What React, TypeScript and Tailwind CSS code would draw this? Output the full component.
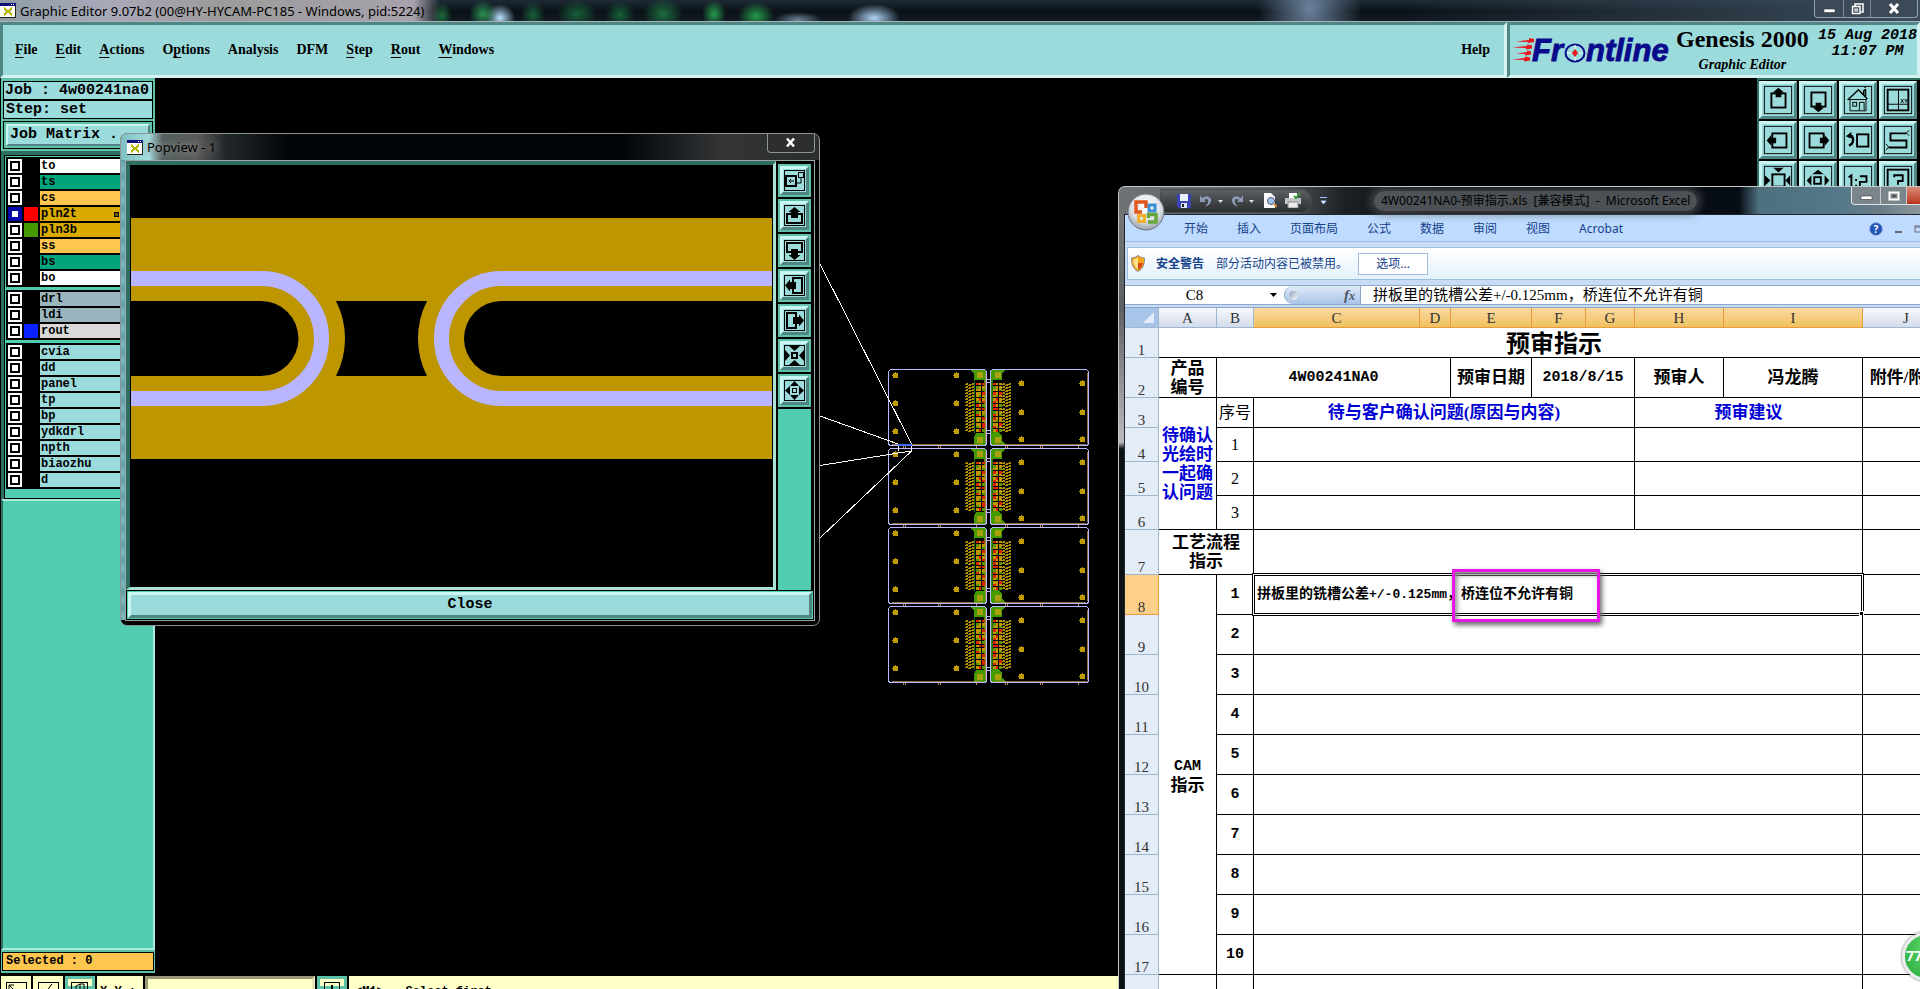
import React from "react";

const MONO = "font-['Liberation_Mono','Noto_Sans_CJK_SC',monospace]";
const SERIF = "font-['Liberation_Serif','Noto_Sans_CJK_SC',serif]";
const UI = "font-['Noto_Sans','Noto_Sans_CJK_SC',sans-serif]";

const RAISED =
  "border-t-[#c9f6f3] border-l-[#c9f6f3] border-b-[#4f8583] border-r-[#4f8583]";
const SUNKEN =
  "border-t-[#4f8583] border-l-[#4f8583] border-b-[#d3f2f0] border-r-[#d3f2f0]";

function XIcon() {
  return (
    <svg width="16" height="15" viewBox="0 0 16 15" shapeRendering="crispEdges">
      <rect width="16" height="15" fill="#fff" />
      <rect width="16" height="3" fill="#10107a" />
      <rect x="11" y="1" width="1" height="1" fill="#fff" />
      <rect x="13" y="1" width="1" height="1" fill="#fff" />
      <path d="M4 5l8 7M12 5l-8 7" stroke="#b7b700" strokeWidth="2" />
      <path d="M15.5 3v11.500H0" stroke="#222" fill="none" />
    </svg>
  );
}

function TitleBar() {
  return (
    <header className="relative flex h-[22px] shrink-0 items-center justify-between border-b border-[#a9b3ba] bg-[linear-gradient(180deg,#1d2a35_0%,#0b1117_55%,#111a22_100%)]">
      <div className="absolute inset-0 bg-[radial-gradient(ellipse_10px_14px_at_442px_16px,#1d6a3a,transparent),radial-gradient(ellipse_14px_14px_at_483px_14px,#2b8f52,transparent),radial-gradient(ellipse_15px_14px_at_500px_18px,#b8e0ff,transparent),radial-gradient(ellipse_12px_14px_at_533px_15px,#17603a,transparent),radial-gradient(ellipse_20px_14px_at_577px_14px,#17603a,transparent),radial-gradient(ellipse_15px_14px_at_620px_15px,#17603a,transparent),radial-gradient(ellipse_20px_16px_at_663px_14px,#1b6e3e,transparent),radial-gradient(ellipse_12px_14px_at_714px_14px,#259a4c,transparent),radial-gradient(ellipse_18px_14px_at_756px_16px,#259a4c,transparent),radial-gradient(ellipse_24px_8px_at_798px_20px,#6a8496,transparent),radial-gradient(ellipse_26px_14px_at_874px_18px,#b0d4f8,transparent),radial-gradient(ellipse_52px_60px_at_1310px_8px,#6b819c,transparent),linear-gradient(90deg,transparent_1400px,#3a4b5a_1900px)]" />
      <div className="absolute inset-y-0 left-0 w-[440px] bg-[linear-gradient(90deg,#8f9da5_0%,#a9a9b9_25%,#9b9b9b_50%,#a7a2ac_94%,transparent_100%)]" />
      <div className="relative flex items-center gap-1">
        <XIcon />
        <h1 className={`${UI} text-[13px] leading-4 whitespace-nowrap text-black`}>
          Graphic Editor 9.07b2 (00@HY-HYCAM-PC185 - Windows, pid:5224)
        </h1>
      </div>
      <div className="relative mr-[2px] flex h-[18px] self-start overflow-hidden rounded-b border border-t-0 border-[#93a0ab] bg-[#3c4a58]">
        <button aria-label="Minimize" className="flex w-[29px] items-center justify-center border-r border-[#7d8a96]">
          <svg width="13" height="12"><rect x="1" y="6" width="11" height="3.500" fill="#fff" stroke="#333" strokeWidth=".6" /></svg>
        </button>
        <button aria-label="Restore" className="flex w-[27px] items-center justify-center border-r border-[#7d8a96]">
          <svg width="13" height="12" fill="none" stroke="#fff" strokeWidth="1.500"><path d="M4 3V1h8v8h-2" /><rect x="1.500" y="3.500" width="7.500" height="7" /><rect x="4" y="6" width="2.500" height="2" strokeWidth="1" /></svg>
        </button>
        <button aria-label="Close" className="flex w-[46px] items-center justify-center">
          <svg width="12" height="11"><path d="M2 1l8 9M10 1l-8 9" stroke="#fff" strokeWidth="3" /></svg>
        </button>
      </div>
    </header>
  );
}

const MENU: [string, string, string][] = [
  ["", "F", "ile"],
  ["", "E", "dit"],
  ["", "A", "ctions"],
  ["O", "p", "tions"],
  ["Analysis", "", ""],
  ["DFM", "", ""],
  ["", "S", "tep"],
  ["", "R", "out"],
  ["", "W", "indows"],
];

function FrontlineLogo() {
  return (
    <svg width="162" height="40" viewBox="0 -6 162 40">
      <g fill="#e8161c">
        <path d="M4 3.500L17 2v-2l5 1v3l-6 1V4z" />
        <path d="M0 9.500L15 8V6.500l5 1v3l-6 1V10z" />
        <path d="M4 15.500L15 14v-1.500l4 1v3l-6 1V16z" />
        <path d="M0 21.500L13 20v-1.500l5 1v3l-6 1V22z" />
      </g>
      <g className="font-['Liberation_Sans',sans-serif]" fill="#0a0a8c" stroke="#0a0a8c" strokeWidth=".9" fontWeight="bold" fontStyle="italic" fontSize="31">
        <text x="20" y="23">Fr</text>
        <text x="74" y="23">ntline</text>
      </g>
      <ellipse cx="63" cy="15" rx="9.500" ry="8.500" fill="none" stroke="#0a0a8c" strokeWidth="2" />
      <path d="M63 11l3 4-3 4-3-4z" fill="#e8161c" />
      <path d="M63 7v4M63 19v4M55 15h4M67 15h4" stroke="#fff" />
    </svg>
  );
}

function MenuBar() {
  return (
    <div className="flex h-14 shrink-0 bg-[#d3f2f0] text-black">
      <nav className={`flex flex-1 items-center justify-between border-3 bg-[#9cdbdb] pr-[14px] pl-3 ${SUNKEN}`}>
        <div className={`${SERIF} flex gap-[18px] text-[14px] leading-4 font-bold`}>
          {MENU.map(([pre, key, post]) => (
            <button key={pre + key + post}>
              {pre}
              {key && <span className="underline underline-offset-3">{key}</span>}
              {post}
            </button>
          ))}
        </div>
        <button className={`${SERIF} text-[14px] leading-4 font-bold`}>Help</button>
      </nav>
      <div className={`flex w-[413px] items-start gap-[2px] border-3 bg-[#9cdbdb] pl-[2px] ${SUNKEN}`}>
        <div className="pt-[7px]">
          <FrontlineLogo />
        </div>
        <div className={`${SERIF} flex flex-col items-center font-bold whitespace-nowrap`}>
          <span className="text-[24px] leading-7">Genesis 2000</span>
          <span className="text-[14px] leading-6 italic">Graphic Editor</span>
        </div>
        <div className={`${MONO} ml-auto pt-[3px] text-center text-[15px] leading-4 font-bold whitespace-nowrap italic`}>
          15 Aug 2018
          <br />
          11:07 PM
        </div>
      </div>
    </div>
  );
}

type Layer = { name: string; bg: string; swatch?: string; active?: boolean };

const LAYERS: Layer[][] = [
  [
    { name: "to", bg: "bg-white" },
    { name: "ts", bg: "bg-[#00a57d]" },
    { name: "cs", bg: "bg-[#fcc64f]" },
    { name: "pln2t", bg: "bg-[#d9ab00]", swatch: "bg-[#ff0000]", active: true },
    { name: "pln3b", bg: "bg-[#d9ab00]", swatch: "bg-[#449a00]" },
    { name: "ss", bg: "bg-[#fcc64f]" },
    { name: "bs", bg: "bg-[#00a57d]" },
    { name: "bo", bg: "bg-white" },
  ],
  [
    { name: "drl", bg: "bg-[#9bb5be]" },
    { name: "ldi", bg: "bg-[#9bb5be]" },
    { name: "rout", bg: "bg-[#d9d9d9]", swatch: "bg-[#0a22ff]" },
  ],
  ["cvia", "dd", "panel", "tp", "bp", "ydkdrl", "npth", "biaozhu", "d"].map((name) => ({
    name,
    bg: "bg-[#9cdbdb]",
  })),
];

function LayerRow({ layer }: { layer: Layer }) {
  return (
    <label className="flex h-4 border-b-2 border-black">
      <span className={`flex w-[14px] items-center justify-center ${layer.active ? "bg-[#0606a8]" : "bg-white"}`}>
        <input
          type="checkbox"
          defaultChecked={layer.active}
          className={`size-[10px] appearance-none border-2 bg-white ${layer.active ? "border-[#0606a8]" : "border-black"}`}
        />
      </span>
      <span className={`mr-px ml-[2px] w-[14px] ${layer.swatch ?? "bg-black"}`} />
      <span className={`ml-px flex flex-1 justify-between pr-[30px] pl-px text-[12px] leading-[14px] font-bold ${layer.bg}`}>
        {layer.name}
        {layer.active && <span className="mt-[5px] size-[5px] border border-black bg-[#6b5500]" />}
      </span>
    </label>
  );
}

function Sidebar() {
  return (
    <aside className={`${MONO} flex w-[155px] flex-col border-l border-black bg-[#5fc2a8] pt-[3px] text-black`}>
      <div className="mr-[2px] ml-[2px] border border-black bg-[#9cdbdb] pl-px text-[15px] leading-[17px] font-bold whitespace-nowrap">
        Job : 4w00241na0
      </div>
      <div className="mr-[2px] ml-[2px] border border-black bg-[#9cdbdb] pl-[2px] text-[15px] leading-[17px] font-bold">
        Step: set
      </div>
      <div className="mt-[2px] mr-[2px] mb-[2px] ml-[2px] border border-black p-[2px]">
        <button className={`block w-full border-2 bg-[#9cdbdb] pl-[2px] text-left text-[15px] leading-[18px] font-bold whitespace-nowrap ${RAISED}`}>
          Job Matrix ...
        </button>
      </div>
      <div className="border-t-4 border-r-2 border-l-3 border-[#2f6e63]">
        <div className="flex flex-col gap-[3px] border border-black bg-[#52cdb1] px-px pt-px pb-[9px]">
          {LAYERS.map((group) => (
            <div key={group[0].name} className="border-2 border-b-0 border-black bg-black">
              {group.map((layer) => (
                <LayerRow key={layer.name} layer={layer} />
              ))}
            </div>
          ))}
        </div>
      </div>
      <div className="flex-1 border-2 border-t-[#a9e9da] border-r-[#a9e9da] border-b-[#a9e9da] border-l-[#2f6e63] bg-[#52cdb1]" />
      <div className="mx-px my-[2px] border border-black bg-[#fcc64f] pl-[3px] text-[12px] leading-[17px] font-bold">
        Selected : 0
      </div>
    </aside>
  );
}

const arrowUp = (x: number, y: number) => `M${x} ${y}l6 5h-3v5h-6v-5h-3z`;
const arrowDown = (x: number, y: number) => `M${x} ${y}l6-5h-3v-5h-6v5h-3z`;
const arrowLeft = (x: number, y: number) => `M${x} ${y}l5-6v3h5v6h-5v3z`;
const arrowRight = (x: number, y: number) => `M${x} ${y}l-5-6v3h-5v6h5v3z`;

const TOOLS: { label: string; art: React.ReactNode }[] = [
  { label: "Pan up", art: <><rect x="12" y="12" width="15" height="15" strokeWidth="2" /><path d={arrowUp(19.5, 6)} fill="#000" stroke="none" /></> },
  { label: "Pan down", art: <><rect x="12" y="11" width="15" height="15" strokeWidth="2" /><path d={arrowDown(19.5, 32)} fill="#000" stroke="none" /></> },
  { label: "Home", art: <><path d="M8 19L19.500 8 29 18M25 13V9l2-1v7M26 6l1-1" strokeWidth="1.500" /><path d="M10.500 18v12.500h17V18M10 18.500h18" /><rect x="13.500" y="21.500" width="4" height="4" /><path d="M20.500 30v-8.500h5V30" /></> },
  { label: "Coordinates", art: <><rect x="8" y="8" width="22" height="22" strokeWidth="2" /><path d="M19.500 8v22M8 23.500h22M22 18l3 4M25 18l-3 4M26 18l1.500 2 1.500-2M27.500 20v2" /></> },
  { label: "Pan left", art: <><rect x="13" y="12" width="15" height="15" strokeWidth="2" /><path d={arrowLeft(7, 19.5)} fill="#000" stroke="none" /></> },
  { label: "Pan right", art: <><rect x="10" y="12" width="15" height="15" strokeWidth="2" /><path d={arrowRight(31, 19.5)} fill="#000" stroke="none" /></> },
  { label: "Previous view", art: <><rect x="18" y="13" width="12" height="13" strokeWidth="2" /><path d="M9 15h3.500q2.500 4 0 8l-3 2" strokeWidth="2.500" /><path d="M6 15l6-4.500v7z" fill="#000" stroke="none" /></> },
  { label: "Serpentine", art: <><path d="M28 12H11v7.500h17V27H9" strokeWidth="2" /><path d="M31 8.500l-3 3 3 3M6 23l3 3.500L6 30" /></> },
  { label: "Zoom in", art: <><rect x="13" y="13" width="13" height="13" strokeWidth="2" /><path d="M14 6h11l-5.500 5zM5 14v11l6-5.500zM32 14v11l-5-5.500z" fill="#000" stroke="none" /></> },
  { label: "Zoom out", art: <><rect x="15" y="16" width="7" height="7" strokeWidth="2" /><path d="M13 13h12l-6-5zM12 14v11l-5-5.500zM26 14v11l5-5.500z" fill="#000" stroke="none" /></> },
  { label: "Scale", art: <><path d="M9 16l3-2v14M17 18v2M17 24v2M21 15h7v6h-7v7h8" strokeWidth="2" /></> },
  { label: "Query", art: <><rect x="8" y="8" width="22" height="22" strokeWidth="2" /><path d="M15 16v-2h9v6h-5v4" strokeWidth="2" /></> },
];

function ViewTools() {
  return (
    <div className="grid grid-cols-4 content-start gap-[2px] self-start border-2 border-r-0 border-[#2f6e63] bg-black pt-px pr-[3px]">
      {TOOLS.map((tool) => (
        <button key={tool.label} aria-label={tool.label} className={`size-[38px] border-3 bg-[#9cdbdb] ${RAISED}`}>
          <svg width="32" height="32" viewBox="2 2 34 34" fill="none" stroke="#000" strokeWidth="1">
            <rect x="4.500" y="4.500" width="29" height="29" />
            {tool.art}
          </svg>
        </button>
      ))}
    </div>
  );
}

/* One board of the panel: 99 wide and 77 high, mirrored when `flip` is set. */
function Board({ x, y, flip }: { x: number; y: number; flip?: boolean }) {
  const padsX = flip ? [31, 92] : [7, 68];
  const padsY = flip ? [14, 43, 70] : [6, 34, 62];
  const block = flip ? 0 : 86;
  const cells = flip ? 3 : 88;
  const dashes = flip ? 13 : 78;
  const items: React.ReactNode[] = [];
  for (const start of [14, 39]) {
    for (let r = 0; r < 8; r++) {
      for (let c = 0; c < 3; c++) {
        const red = (r * 5 + c * 3 + start) % 7 === 0 || (c === (flip ? 0 : 2) && r % 3 === 0);
        const green = (r + c * 2) % 5 === 1;
        items.push(
          <rect key={`c${start}-${r}-${c}`} x={cells + c * 3} y={start + r * 3} width={c === 1 ? 2 : 3} height={r % 2 ? 3 : 2} fill={red ? "#dd2200" : green ? "#5c9500" : "#bf9500"} />,
          <rect key={`d${start}-${r}-${c}`} x={dashes + c * 3} y={start + r * 3 + (c % 2 ? 1 : 0)} width="2" height="2" fill="#b08c00" />,
          <rect key={`e${start}-${r}-${c}`} x={dashes + c * 3 - 1} y={start + r * 3 + (c % 2 ? 2 : 1)} width="2" height="1" fill="#b08c00" />,
        );
      }
    }
  }
  return (
    <g transform={`translate(${x} ${y})`}>
      <rect x={flip ? 1 : 96} y="2" width="2" height="73" fill="#3d8f0c" />
      <path d={flip ? "M0 1h15l-3 3v7H0zM0 63h9l3 4v5l4 4H0z" : "M98 1H82l4 4v6h12zM98 64h-10l-2 4v8h12z"} fill="#449a00" />
      <path d={flip ? "M2 11V64" : "M86.500 11V64"} stroke="#1f6b12" />
      {items}
      {[6, 71].map((py) => (
        <rect key={py} x={block + (flip ? 5 : 3)} y={py - 3} width="6" height="6" fill="#a9a010" />
      ))}
      {padsX.flatMap((px) =>
        padsY.map((py) => (
          <path key={`${px}-${py}`} d={`M${px - 2} ${py - 2}h2v-1h1v1h2v5h-5v-2h-1v-1h1z`} fill="#bf9a00" />
        )),
      )}
      <rect x=".5" y=".5" width="98" height="76" rx="3" fill="none" stroke="#b9b7ff" />
      <path d={flip ? "M97.500 4v70M4 75.500h92" : "M97.500 4v70M4 75.500h90"} stroke="#b58a4c" strokeOpacity=".8" fill="none" />
      <path d="M15 77v2M17 77v2M50 77v2M52 77v2M88 77v2" stroke="#b58a4c" />
    </g>
  );
}

function BoardPanel() {
  return (
    <svg className="absolute top-[260px] left-[820px]" width="280" height="430" viewBox="820 260 280 430" shapeRendering="crispEdges">
      {[369, 448, 527, 606].map((y) => (
        <g key={y}>
          <Board x={888} y={y} />
          <Board x={990} y={y} flip />
          <path d={`M987 ${y + 10}h4M987 ${y + 13}h4M987 ${y + 61}h4M987 ${y + 64}h4`} stroke="#b9b7ff" />
        </g>
      ))}
      <g stroke="#fff" fill="none">
        <path d="M820 264L911.500 444V451L820 538" />
        <path d="M820 416L898 444V451M820 465.500L911 451" />
      </g>
      <path d="M898 444.500h14" stroke="#3d6cff" strokeWidth="2" />
    </svg>
  );
}

const POP_TOOLS: { label: string; art: React.ReactNode }[] = [
  { label: "Copy view", art: <><rect x="8" y="12" width="10" height="10" strokeWidth="2" /><rect x="20.500" y="8.500" width="5" height="5" /><path d="M23 13v6h-5M11 17h5M13 15l-2 2 2 2" /></> },
  { label: "Up", art: <><path d="M14 15H9v9h15v-9h-5" strokeWidth="2" /><path d="M16.500 8l6 5h-2.500v6h-7v-6h-2.500z" fill="#000" stroke="none" /></> },
  { label: "Down", art: <><path d="M14 18H9V9h15v9h-5" strokeWidth="2" /><path d="M16.500 26l6-5h-2.500v-6h-7v6h-2.500z" fill="#000" stroke="none" /></> },
  { label: "Left", art: <><path d="M15 13V9h9v15h-9v-4" strokeWidth="2" /><path d="M7 16.500l5-6v2.500h6v7h-6v2.500z" fill="#000" stroke="none" /></> },
  { label: "Right", art: <><path d="M18 13V9H9v15h9v-4" strokeWidth="2" /><path d="M26 16.500l-5-6v2.500h-6v7h6v2.500z" fill="#000" stroke="none" /></> },
  { label: "Shrink", art: <><rect x="14" y="14" width="5" height="5" strokeWidth="2" /><path d="M11 7h11l-5.500 5zM11 26h11l-5.500-5zM7 11v11l5-5.500zM26 11v11l-5-5.500z" fill="#000" stroke="none" /></> },
  { label: "Grow", art: <><rect x="14.500" y="14.500" width="4" height="4" /><path d="M12 12h9l-4.500-5zM12 21h9l-4.500 5zM12 12v9l-5-4.500zM21 12v9l5-4.500z" fill="#000" stroke="none" /></> },
];

function Popview() {
  return (
    <section className="absolute top-[133px] left-[120px] w-[700px] rounded-[7px] border border-[#8d9696] bg-black bg-[linear-gradient(90deg,#7fc0c2_0%,#a5dedd_4%,#55605f_6%,#5a5a5a_11%,#22272a_15%,#030608_24%,#020507_72%,#323436_86%,#2b2d2f_100%)] bg-[length:100%_26px] bg-no-repeat">
      <div className="absolute top-[26px] left-0 h-[460px] w-[4px] bg-[repeating-linear-gradient(180deg,#5e9ea6_0px,#7dbabd_8px,#5e9ea6_16px)]" />
      <div className="flex h-[26px] justify-between pl-[6px]">
        <div className="flex items-center gap-1">
          <XIcon />
          <h2 className={`${UI} text-[13px] leading-4 text-black [text-shadow:0_0_8px_#999,0_0_8px_#888]`}>Popview - 1</h2>
        </div>
        <button aria-label="Close window" className="mr-[4px] flex h-[19px] w-[48px] items-center justify-center rounded-b-[4px] border border-t-0 border-[#8d9696] bg-[#2c2e30] pb-[2px]">
          <svg width="12" height="11"><path d="M2 1.500l7 8M9 1.500l-7 8" stroke="#fff" strokeWidth="2.500" /></svg>
        </button>
      </div>
      <div className="mr-[4px] mb-[4px] ml-[4px] border border-[#9aa6a5] bg-black">
        <div className="flex">
          <div className="min-w-0 flex-1 border-t-4 border-r-3 border-b-3 border-l-4 border-t-[#2f6e63] border-r-[#a9e2d5] border-b-[#a9e2d5] border-l-[#2f6e63] bg-black">
            <svg className="block w-full" height="422" viewBox="130 165 643 422" preserveAspectRatio="none">
              <rect x="131" y="218" width="641" height="241" fill="#bd9600" />
              <path d="M336 301H427A82.500 82.500 0 0 0 427 376H336A82.500 82.500 0 0 0 336 301z" fill="#000" />
              <path d="M131 301H261A37.500 37.500 0 0 1 261 376H131zM772 301H501.500A37.500 37.500 0 0 0 501.500 376H772z" fill="#000" />
              <path d="M131 278.500H261.500A60 60 0 0 1 261.500 398.500H131M772 278.500H501.500A60 60 0 0 0 501.500 398.500H772" fill="none" stroke="#bab5ff" strokeWidth="15" />
            </svg>
          </div>
          <div className="flex w-[38px] flex-col gap-[2px] pt-[3px] pr-[3px] pl-[2px]">
            {POP_TOOLS.map((tool) => (
              <button key={tool.label} aria-label={tool.label} className="size-[33px] border-2 border-[#5fc2a8]">
                <span className={`block border-3 bg-[#9cdbdb] ${RAISED}`}>
                  <svg width="23" height="23" viewBox="5 5 23 23" fill="none" stroke="#000">
                    <rect x="6.500" y="6.500" width="20" height="20" />
                    {tool.art}
                  </svg>
                </span>
              </button>
            ))}
            <div className="flex-1 bg-[#52cdb1]" />
          </div>
        </div>
        <div className="p-[2px]">
          <button className={`${MONO} block w-full border-3 bg-[#9cdbdb] text-center text-[15px] leading-[20px] font-bold text-black outline outline-[#52cdb1] ${RAISED}`}>
            Close
          </button>
        </div>
      </div>
    </section>
  );
}

function QuickAccess() {
  return (
    <div className="flex items-center">
      <div className="flex h-6 items-center gap-2 rounded-r-full border border-[#4a4d50] bg-[#3a3d40] bg-linear-to-b from-[#5c6064] to-[#2c2e30] pr-[10px] pl-4">
        <button aria-label="Save">
          <svg width="14" height="14"><path d="M0 0h14v14H2l-2-2z" fill="#3b44b5" /><rect x="3" y="0" width="8" height="7" fill="#e9f0ff" /><rect x="4" y="9" width="6" height="5" fill="#dfe3f5" /><rect x="5" y="10" width="2" height="3" fill="#223" /></svg>
        </button>
        <button aria-label="Undo">
          <svg width="24" height="14"><path d="M1 1v7h6L5 6q5-3 4 3l-3 4q7-3 6-8Q9 0 3 4z" fill="#8c9cb4" /><path d="M19 6h5l-2.500 3z" fill="#dfe3e6" /></svg>
        </button>
        <button aria-label="Redo">
          <svg width="24" height="14"><path d="M12 1v7H6l2-2Q3 3 4 9l3 4Q0 10 1 5q3-5 9-1z" fill="#8c9cb4" /><path d="M18 6h5l-2.500 3z" fill="#dfe3e6" /></svg>
        </button>
        <button aria-label="Print preview">
          <svg width="14" height="15"><path d="M1 0h7l4 4v11H1z" fill="#fff" /><circle cx="8" cy="8" r="3.500" fill="#9cc6ea" stroke="#557" /><path d="M11 11l3 3" stroke="#d98b25" strokeWidth="2" /></svg>
        </button>
        <button aria-label="Quick print">
          <svg width="16" height="15"><path d="M4 0h8v5H4z" fill="#fff" /><path d="M0 5h16v6H0z" fill="#c3c7cc" /><path d="M3 9h10v6H3z" fill="#eee" stroke="#888" /><path d="M9 3l2 2 4-5" stroke="#3aa03a" strokeWidth="2" fill="none" /></svg>
        </button>
      </div>
      <button aria-label="Customize toolbar" className="ml-2">
        <svg width="7" height="8"><path d="M0 .5h7M1 4h5L3.500 7z" stroke="#9fc4ff" fill="#fff" /></svg>
      </button>
    </div>
  );
}

function OfficeOrb() {
  return (
    <button aria-label="Office menu" className="absolute top-[6px] left-[8px]">
      <svg className="block" width="38" height="38" viewBox="0 0 38 38">
        <defs>
          <radialGradient id="orb" cx=".5" cy=".35" r=".65">
            <stop offset="0" stopColor="#fff" />
            <stop offset=".6" stopColor="#dfe4ea" />
            <stop offset="1" stopColor="#98a2ae" />
          </radialGradient>
        </defs>
        <circle cx="19" cy="19" r="18" fill="url(#orb)" stroke="#6f7780" />
        <g fill="none" strokeWidth="3.500">
          <path d="M15 19H9V9h10v6" stroke="#e2571e" />
          <rect x="22" y="12" width="6" height="6" strokeWidth="3" stroke="#3b8fd4" />
          <rect x="11.500" y="22.500" width="6" height="6" strokeWidth="3" stroke="#f3b02c" />
          <path d="M21.500 25V21.500H29V29h-8" stroke="#68a63a" />
        </g>
      </svg>
    </button>
  );
}

const COLS: [string, string][] = [
  ["A", "w-[58px]"],
  ["B", "w-[37px]"],
  ["C", "w-[166px]"],
  ["D", "w-[31px]"],
  ["E", "w-[81px]"],
  ["F", "w-[54px]"],
  ["G", "w-[49px]"],
  ["H", "w-[89px]"],
  ["I", "w-[139px]"],
  ["J", "w-[87px]"],
];

function RowHead({ n, active }: { n: number; active?: boolean }) {
  return (
    <th
      scope="row"
      className={`border-r border-b p-0 align-bottom text-[15px] leading-[14px] font-normal text-[#333] ${active ? "border-[#e99a3c] bg-[#fdd08a]" : "border-[#9eb6ce] bg-[#e4ecf7]"}`}
    >
      {n}
    </th>
  );
}

const CELL = "border-r border-b border-black p-0 text-center text-[17px] leading-[19px] whitespace-nowrap";

function Sheet() {
  return (
    <table className={`${SERIF} w-[825px] table-fixed border-separate border-spacing-0 bg-white text-black`}>
      <colgroup>
        <col className="w-[34px]" />
        {COLS.map(([c, w]) => (
          <col key={c} className={w} />
        ))}
      </colgroup>
      <thead>
        <tr className="h-5">
          <td className="border-r border-b border-[#9eb6ce] bg-[#a9c4e9] p-0">
            <svg className="mr-1 ml-auto block" width="11" height="11"><path d="M11 0v11H0z" fill="#e3ecf8" /></svg>
          </td>
          {COLS.map(([c]) => (
            <th
              key={c}
              scope="col"
              className={`border-r border-b p-0 text-[15px] leading-[18px] font-normal text-[#333] ${"CDEFGHI".includes(c) ? "border-[#e99a3c] bg-[#f3c877] bg-linear-to-b from-[#f9d99f] to-[#f1c15f]" : "border-[#9eb6ce] bg-linear-to-b from-[#f6f9fd] to-[#d3dcea]"}`}
            >
              {c}
            </th>
          ))}
        </tr>
      </thead>
      <tbody>
        <tr className="h-[30px]">
          <RowHead n={1} />
          <td colSpan={10} className={`${CELL} pt-[3px]! text-[24px]! font-bold`}>预审指示</td>
        </tr>
        <tr className="h-10">
          <RowHead n={2} />
          <td className={`${CELL} font-bold`}>产品<br />编号</td>
          <td colSpan={3} className={`${CELL} ${MONO} text-[15px]! font-bold`}>4W00241NA0</td>
          <td className={`${CELL} font-bold`}>预审日期</td>
          <td colSpan={2} className={`${CELL} ${MONO} text-[15px]! font-bold`}>2018/8/15</td>
          <td className={`${CELL} font-bold`}>预审人</td>
          <td className={`${CELL} font-bold`}>冯龙腾</td>
          <td className={`${CELL} font-bold`}>附件/附图</td>
        </tr>
        <tr className="h-[30px]">
          <RowHead n={3} />
          <td rowSpan={4} className={`${CELL} font-bold text-[#0000d4]`}>待确认<br />光绘时<br />一起确<br />认问题</td>
          <td className={`${CELL} text-[16px]!`}>序号</td>
          <td colSpan={5} className={`${CELL} font-bold text-[#0000d4]`}>待与客户确认问题(原因与内容)</td>
          <td colSpan={2} className={`${CELL} font-bold text-[#0000d4]`}>预审建议</td>
          <td className={CELL} />
        </tr>
        {[1, 2, 3].map((n) => (
          <tr key={n} className="h-[34px]">
            <RowHead n={n + 3} />
            <td className={`${CELL} text-[16px]!`}>{n}</td>
            <td colSpan={5} className={CELL} />
            <td colSpan={2} className={CELL} />
            <td className={CELL} />
          </tr>
        ))}
        <tr className="h-[45px]">
          <RowHead n={7} />
          <td colSpan={2} className={`${CELL} font-bold`}>工艺流程<br />指示</td>
          <td colSpan={7} className={CELL} />
          <td className={CELL} />
        </tr>
        {Array.from({ length: 10 }, (_, i) => i + 1).map((n) => (
          <tr key={n} className="h-10">
            <RowHead n={n + 7} active={n === 1} />
            {n === 1 && (
              <td rowSpan={10} className={`${CELL} font-bold`}>
                <span className={`${MONO} text-[15px]`}>CAM</span><br />指示
              </td>
            )}
            <td className={`${CELL} ${MONO} text-[15px]! font-bold`}>{n}</td>
            <td colSpan={7} className={`${CELL} ${MONO} relative text-left! text-[13px]! font-bold`}>
              {n === 1 && (
                <>
                  <div className="absolute -inset-[2px] border-3 border-double border-black bg-white" />
                  <div className="absolute -right-[2px] -bottom-[2px] size-[5px] border border-white bg-black" />
                  <div className="relative pl-[3px]">
                    <span className="text-[14px]">拼板里的铣槽公差</span>+/-0.125mm
                    <span className="text-[14px]">，桥连位不允许有铜</span>
                  </div>
                </>
              )}
            </td>
            <td className={CELL} />
          </tr>
        ))}
        <tr className="h-10">
          <td className="border-r border-[#9eb6ce] bg-[#e4ecf7]" />
          <td className={CELL} />
          <td className={CELL} />
          <td colSpan={7} className={CELL} />
          <td className={CELL} />
        </tr>
      </tbody>
    </table>
  );
}

const TABS = ["开始", "插入", "页面布局", "公式", "数据", "审阅", "视图", "Acrobat"];

function ExcelWindow() {
  return (
    <section className="absolute top-[186px] right-0 bottom-0 left-[1118px] flex flex-col overflow-hidden rounded-tl-[7px] border-t border-l border-[#c4c8cb] bg-[linear-gradient(180deg,#7a7d80_0px,#5d6062_120px,#b9bbbd_255px,#0c1118_262px)]">
      <div className="relative flex h-[27px] shrink-0 items-center bg-[linear-gradient(90deg,#707376_0px,#55585b_160px,#1d2125_225px,#04080d_330px,#070d14_620px,#4d6f7e_640px,#55798a_720px,#6a7b86_760px,#8d989e_803px)]">
        <div className="pl-[41px]">
          <QuickAccess />
        </div>
        <h2 className={`${UI} ml-[47px] rounded-full bg-[#6b6f72]/70 px-[7px] text-[12px] leading-5 whitespace-pre text-black shadow-[0_0_8px_4px_#5d616499]`}>
          4W00241NA0-预审指示.xls  [兼容模式]  -  Microsoft Excel
        </h2>
        <div className="absolute top-0 right-0 flex h-[18px] rounded-bl border-b border-l border-[#dfe5e8] bg-[#7b858c]">
          <button aria-label="Minimize workbook" className="flex w-[29px] items-center justify-center border-r border-[#c4ccd1]">
            <svg width="13" height="10"><rect x="1" y="5" width="11" height="3.500" fill="#fff" stroke="#333" strokeWidth=".6" /></svg>
          </button>
          <button aria-label="Restore workbook" className="flex w-[26px] items-center justify-center border-r border-[#c4ccd1]">
            <svg width="12" height="10"><rect x="1.500" y="1.500" width="9" height="7" fill="none" stroke="#fff" strokeWidth="2" /><rect x="4.500" y="4" width="3" height="2" fill="#444" /></svg>
          </button>
          <button aria-label="Close workbook" className="w-[13px] bg-linear-to-b from-[#d98a78] to-[#b8321a]" />
        </div>
      </div>
      <div className={`${UI} ml-[5px] flex min-h-0 flex-1 flex-col border-t border-l border-[#20262c] bg-[#c9dcf5]`}>
        <nav className="flex h-[27px] shrink-0 items-center border-b border-[#a3bbdc] bg-[#bfdbff] pt-px pl-[59px] text-[12px] leading-4 text-[#15428b]">
          <div className="flex gap-[29px] whitespace-nowrap">
            {TABS.map((t) => (
              <button key={t}>{t}</button>
            ))}
          </div>
          <div className="ml-auto flex items-center gap-3">
            <button aria-label="Help" className="flex size-[14px] items-center justify-center rounded-full border border-[#9db9e6] bg-[#2355b8] text-[10px] leading-3 font-bold text-white">?</button>
            <svg width="7" height="8"><path d="M0 7h7" stroke="#667" strokeWidth="2" /></svg>
            <svg width="6" height="8"><path d="M6 1H1v6h5M1 2h5" stroke="#667" fill="none" /></svg>
          </div>
        </nav>
        <div className="mt-[5px] ml-[2px] flex h-[33px] shrink-0 items-center border border-r-0 border-[#9ebfdb] bg-linear-to-b from-white to-[#e3f1fb] pl-[3px] text-[12px] leading-4 whitespace-nowrap text-[#15428b]">
          <svg width="14" height="17" viewBox="0 0 14 17"><path d="M7 .5Q10 3 13.500 3q.5 10-6.500 13.500Q0 13 .5 3 4 3 7 .5z" fill="#f7a516" stroke="#8e8e8e" /><path d="M7 2.500v12Q2 11 2.200 4.500 5 4 7 2.500z" fill="#ffe08a" /><path d="M7 8h5q-1 5-5 7z" fill="#d9480f" /></svg>
          <strong className="ml-[11px]">安全警告</strong>
          <span className="ml-3">部分活动内容已被禁用。</span>
          <button className="ml-[10px] h-[22px] w-[70px] border border-[#a3bbdc] bg-white">选项...</button>
        </div>
        <div className="mt-[5px] flex h-5 shrink-0 items-stretch border-y border-[#8ba6c9] bg-white">
          <div className="relative flex w-[155px]">
            <input aria-label="Name box" defaultValue="C8" className={`${SERIF} block h-[18px] w-full min-w-0 pr-[16px] text-center text-[15px] leading-[18px] text-black outline-none`} />
            <svg className="absolute top-[7px] right-[3px]" width="7" height="4"><path d="M0 0h7L3.500 4z" /></svg>
          </div>
          <button aria-label="Insert function" className={`${SERIF} ml-[4px] flex w-[77px] items-center justify-between rounded-l-full border-r border-l border-[#8ba6c9] bg-linear-to-b from-[#dfeaf8] to-[#a9c4e9] pr-[5px] pl-1 text-[15px] leading-4 font-bold text-[#4d5663] italic`}>
            <span className="size-[9px] rounded-full bg-linear-to-br from-[#8f9fb5] to-white" />
            <span>f<span className="text-[12px]">x</span></span>
          </button>
          <input
            aria-label="Formula"
            defaultValue="拼板里的铣槽公差+/-0.125mm，桥连位不允许有铜"
            className={`${SERIF} block h-[18px] min-w-0 flex-1 pl-3 text-[15px] leading-[18px] text-black outline-none`}
          />
        </div>
        <div className="mt-[2px] min-h-0 flex-1 overflow-hidden border-t border-[#8ba6c9]">
          <Sheet />
        </div>
      </div>
      <OfficeOrb />
    </section>
  );
}

function StatusBar() {
  const small = "flex w-[30px] items-start justify-center bg-[#ffffc8] pt-[6px]";
  return (
    <footer className={`${MONO} flex h-[13px] shrink-0 gap-[2px] overflow-hidden bg-black pl-px text-[12px] leading-4 font-bold text-black`}>
      <button aria-label="Select arrow" className={small}>
        <svg width="21" height="18" fill="none" stroke="#000"><rect x=".5" y=".5" width="20" height="17" /><path d="M3 3l5 5M3 8V3h5" /></svg>
      </button>
      <button aria-label="Confirm" className={small}>
        <svg width="21" height="18" fill="none" stroke="#000"><rect x=".5" y=".5" width="20" height="17" /><path d="M4 7l4 3 6-8" /></svg>
      </button>
      <button aria-label="Page" className={`${small} border-3 border-[#5fc2a8] pt-[3px]!`}>
        <svg width="18" height="18" fill="none" stroke="#000"><rect x=".5" y=".5" width="16" height="17" /><path d="M5 8V4l4-2h4v7M9 2v7" /></svg>
      </button>
      <label htmlFor="coords" className="w-[46px] bg-[#ffffc8] pt-2 pl-[3px]">X Y :</label>
      <input id="coords" className="h-7 w-[170px] border-3 border-t-[#9a9a78] border-r-[#e8e8b8] border-l-[#9a9a78] bg-[#ffffc8]" />
      <button aria-label="Alert" className={`${small} border-3 border-[#5fc2a8] pt-[3px]!`}>
        <svg width="16" height="18" fill="none" stroke="#000"><rect x=".5" y=".5" width="15" height="17" /><path d="M8 3v8" strokeWidth="2" /></svg>
      </button>
      <p className="flex-1 bg-[#ffffc8] pt-2 pl-[6px]">&lt;M1&gt; - Select first</p>
    </footer>
  );
}

export default function App() {
  return (
    <div className="relative flex h-screen w-full flex-col overflow-hidden bg-black">
      <TitleBar />
      <MenuBar />
      <main className="flex min-h-0 flex-1 justify-between pb-[3px]">
        <Sidebar />
        <ViewTools />
      </main>
      <StatusBar />
      <BoardPanel />
      <Popview />
      <ExcelWindow />
      <div className="pointer-events-none absolute top-[569px] left-[1452px] h-[53px] w-[148px] border-3 border-[#e815e5] shadow-[2px_3px_5px_#666,inset_2px_3px_5px_#888]" />
      <div className={`${UI} absolute top-[932px] -right-[31px] size-[49px] rounded-full border-3 border-[#e9eeea] bg-radial-[at_50%_30%] from-[#5fd86a] to-[#27a83c] pl-px text-[14px] leading-[42px] font-bold text-white shadow-[0_0_3px_#555]`}>
        77
      </div>
    </div>
  );
}
